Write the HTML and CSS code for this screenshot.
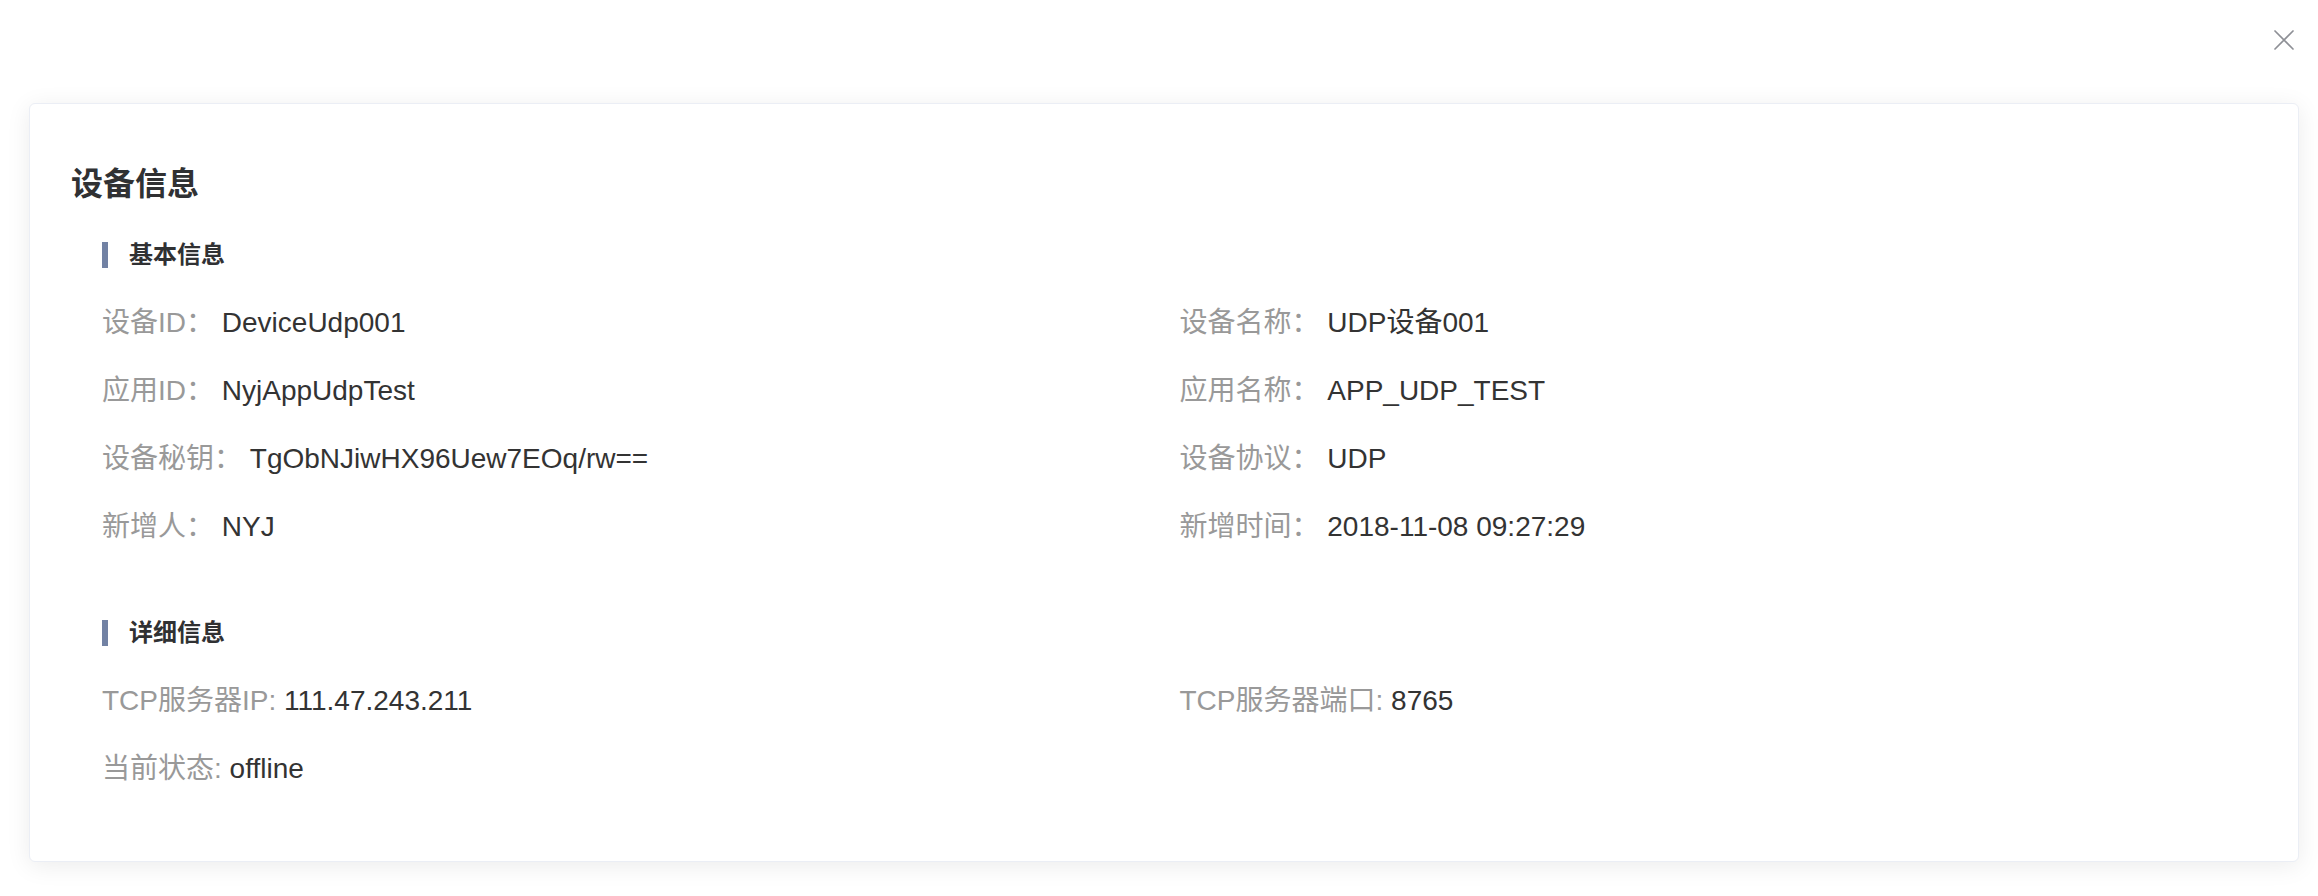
FILE: index.html
```html
<!DOCTYPE html>
<html lang="zh-CN">
<head>
<meta charset="utf-8">
<title>设备信息</title>
<link rel="stylesheet" href="styles.css">
</head>
<body>
<div class="page">
  <div class="topbar">
    <button class="close" aria-label="close">
      <svg width="20" height="20" viewBox="0 0 20 20"><path d="M1 1L19 19M19 1L1 19" stroke="#8e9096" stroke-width="1.7" fill="none" stroke-linecap="round"/></svg>
    </button>
  </div>
  <div class="card">
    <h1 class="title">设备信息</h1>

    <div class="section">
      <div class="sec-head"><span class="bar"></span><span class="sec-title">基本信息</span></div>
      <div class="grid">
        <div class="item"><span class="label">设备ID：</span> <span class="value">DeviceUdp001</span></div>
        <div class="item"><span class="label">设备名称：</span> <span class="value">UDP设备001</span></div>
        <div class="item"><span class="label">应用ID：</span> <span class="value">NyjAppUdpTest</span></div>
        <div class="item"><span class="label">应用名称：</span> <span class="value">APP_UDP_TEST</span></div>
        <div class="item"><span class="label">设备秘钥：</span> <span class="value">TgObNJiwHX96Uew7EOq/rw==</span></div>
        <div class="item"><span class="label">设备协议：</span> <span class="value">UDP</span></div>
        <div class="item"><span class="label">新增人：</span> <span class="value">NYJ</span></div>
        <div class="item"><span class="label">新增时间：</span> <span class="value">2018-11-08 09:27:29</span></div>
      </div>
    </div>

    <div class="section section-2">
      <div class="sec-head"><span class="bar"></span><span class="sec-title">详细信息</span></div>
      <div class="grid">
        <div class="item"><span class="label">TCP服务器IP:</span> <span class="value">111.47.243.211</span></div>
        <div class="item"><span class="label">TCP服务器端口:</span> <span class="value">8765</span></div>
        <div class="item"><span class="label">当前状态:</span> <span class="value">offline</span></div>
      </div>
    </div>
  </div>
</div>
</body>
</html>
```
FILE: styles.css
```css
html, body {
  margin: 0;
  padding: 0;
  background: #ffffff;
}
body {
  font-family: "Liberation Sans", Arial, "Noto Sans CJK SC", sans-serif;
  color: #333333;
}
.page {
  width: 2318px;
  height: 896px;
  box-sizing: border-box;
  padding: 0 19px 0 29px;
}
.topbar {
  height: 103px;
  display: flex;
  justify-content: flex-end;
  align-items: flex-start;
}
.close {
  margin-top: 30px;
  margin-right: 5px;
  width: 20px;
  height: 20px;
  padding: 0;
  border: 0;
  background: transparent;
  display: block;
}
.close svg { display: block; }
.card {
  box-sizing: border-box;
  height: 759px;
  border: 1px solid #ebeef5;
  border-radius: 6px;
  background: #fff;
  box-shadow: 0 4px 24px rgba(0, 0, 0, 0.08);
  padding: 58px 41px 0 41px;
}
.title {
  margin: 0;
  font-size: 32px;
  line-height: 44px;
  font-weight: 700;
  color: #303133;
}
.section {
  padding-left: 31px;
  margin-top: 36px;
}
.section-2 {
  margin-top: 59px;
}
.sec-head {
  display: flex;
  align-items: center;
  height: 26px;
  margin-bottom: 21px;
}
.bar {
  width: 6px;
  height: 26px;
  background: #7282a4;
  margin-right: 21px;
}
.sec-title {
  font-size: 24px;
  line-height: 26px;
  font-weight: 700;
  color: #303133;
}
.grid {
  display: grid;
  grid-template-columns: 1fr 1fr;
}
.item {
  font-size: 28px;
  line-height: 68px;
  height: 68px;
  white-space: nowrap;
}
.label {
  color: #999999;
}
.value {
  color: #333333;
}
```
